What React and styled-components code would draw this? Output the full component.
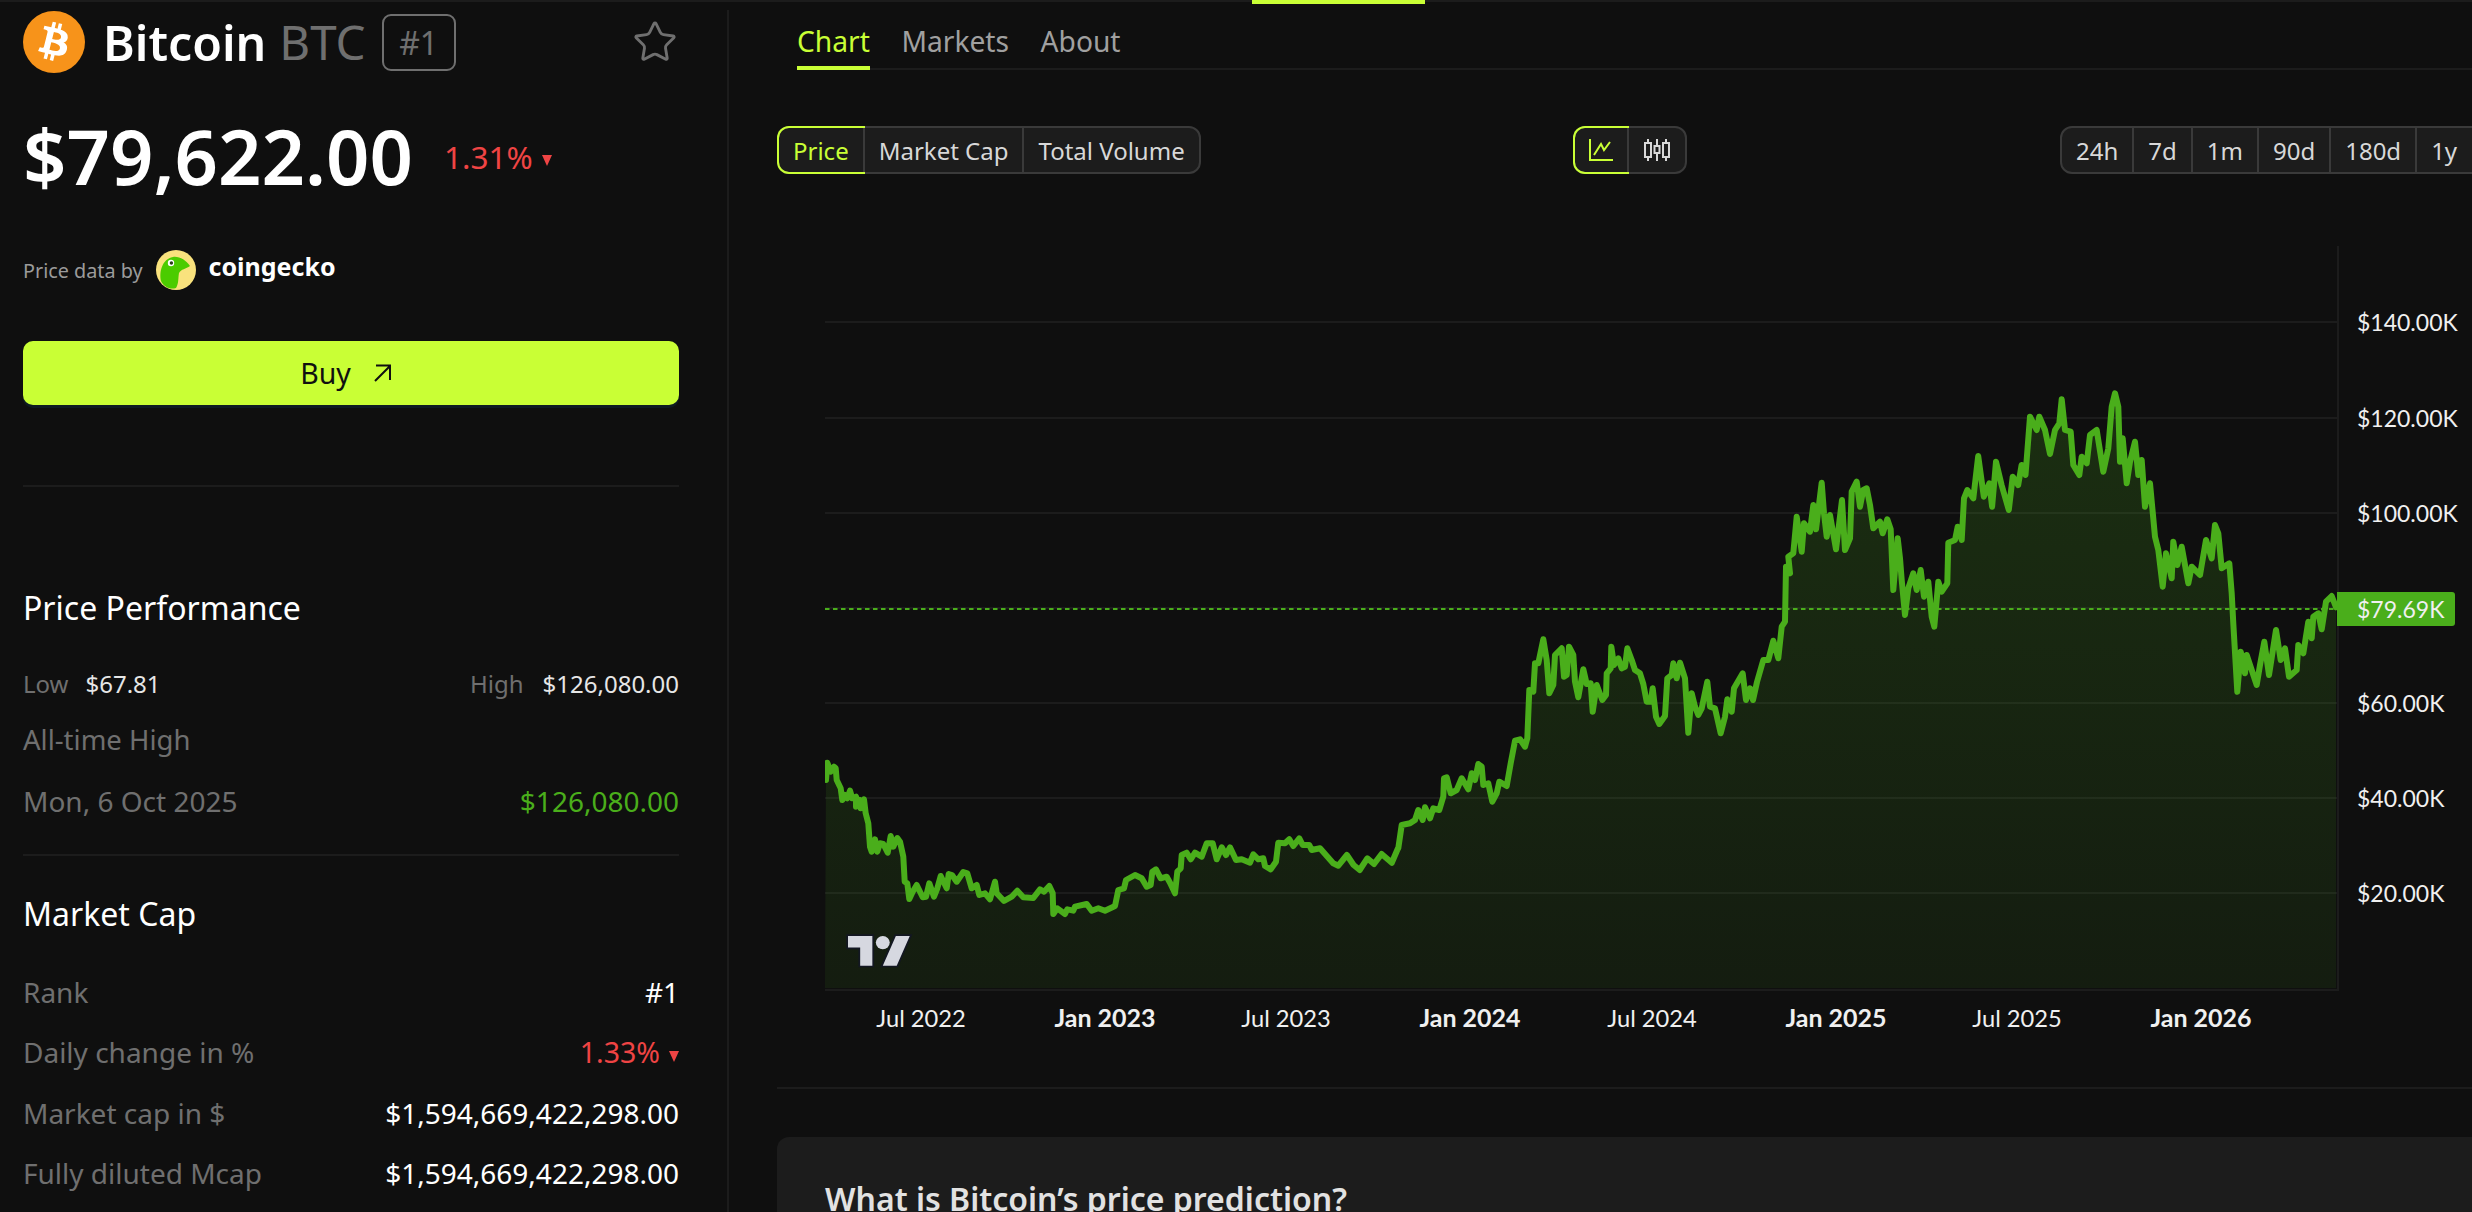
import React from "react";
import styled, { createGlobalStyle } from "styled-components";
import { Star } from "lucide-react";

const LIME = "#c9ff35";
const GREEN = "#4aae1b";
const RED = "#ef4444";
const DIM = "#6f6f6f";
const RULE = "#1c1c1c";

const GlobalStyle = createGlobalStyle`
  html, body {
    margin: 0;
    background: #0f0f0f;
    overflow: hidden;
  }
  body {
    font-family: "Noto Sans", "Liberation Sans", sans-serif;
    color: #fff;
  }
`;

const Page = styled.div`
  width: 2472px;
  height: 1212px;
  overflow: hidden;
  background: #0f0f0f;
`;
const TopStrip = styled.div`
  position: relative;
  height: 2px;
  background: ${RULE};
`;
const TopMark = styled.div`
  position: absolute;
  left: 1252px;
  top: 0;
  width: 173px;
  height: 4px;
  background: ${LIME};
`;
const Body = styled.div`
  display: flex;
  height: 1210px;
`;

/* left column */
const Sidebar = styled.aside`
  flex: none;
  box-sizing: border-box;
  width: 729px;
  padding: 9px 50px 0 23px;
  position: relative;
  &::after {
    content: "";
    position: absolute;
    right: 0;
    top: 8px;
    bottom: 0;
    width: 2px;
    background: ${RULE};
  }
`;
const CoinHeader = styled.div`
  display: flex;
  align-items: center;
  height: 62px;
`;
const CoinName = styled.span`
  margin-left: 18px;
  font-size: 48.2px;
  font-weight: 600;
  line-height: 62px;
`;
const CoinSymbol = styled.span`
  margin-left: 13px;
  font-size: 47.5px;
  line-height: 62px;
  color: ${DIM};
`;
const RankBadge = styled.span`
  box-sizing: border-box;
  display: flex;
  align-items: center;
  justify-content: center;
  width: 74px;
  height: 57px;
  margin-left: 16px;
  border: 2px solid ${DIM};
  border-radius: 9px;
  font-size: 32px;
  color: ${DIM};
`;
const FavStar = styled(Star)`
  margin-left: auto;
  margin-right: 1px;
  color: ${DIM};
`;
const PriceRow = styled.div`
  display: flex;
  align-items: center;
  height: 80px;
  margin-top: 43px;
`;
const BigPrice = styled.span`
  font-size: 76px;
  font-weight: 600;
  line-height: 80px;
`;
const Change = styled.span`
  display: inline-flex;
  align-items: center;
  color: ${RED};
  font-size: ${(p) => p.$size}px;
  margin-left: ${(p) => p.$offset || 0}px;
`;
const DownArrow = styled.i`
  width: 0;
  height: 0;
  margin-left: 9px;
  margin-top: 8px;
  border-left: 5.5px solid transparent;
  border-right: 5.5px solid transparent;
  border-top: 11px solid ${RED};
`;
const DataBy = styled.div`
  display: flex;
  align-items: center;
  height: 40px;
  margin-top: 54px;
`;
const DataByLabel = styled.span`
  font-size: 19.8px;
  color: #9b9b9b;
`;
const GeckoLogo = styled.svg`
  width: 40px;
  height: 40px;
  margin-left: 13px;
`;
const GeckoName = styled.span`
  margin-left: 13px;
  margin-top: -9px;
  font-size: 25px;
  font-weight: 700;
`;
const BuyButton = styled.button`
  display: flex;
  align-items: center;
  justify-content: center;
  gap: 21px;
  width: 100%;
  height: 64px;
  margin-top: 51px;
  padding: 0 10px 0 0;
  border: none;
  border-radius: 10px;
  background: ${LIME};
  box-shadow: 0 3px 0 #0e1b22;
  color: #101010;
  font-family: inherit;
  font-size: 28.5px;
`;
const Divider = styled.div`
  height: 2px;
  margin-top: ${(p) => p.$top}px;
  background: ${RULE};
`;
const SectionTitle = styled.h3`
  margin: ${(p) => p.$top}px 0 0;
  font-size: 32px;
  font-weight: 400;
  line-height: 40px;
  color: #fff;
`;
const RangeRow = styled.div`
  display: flex;
  justify-content: space-between;
  height: 32px;
  line-height: 32px;
  margin-top: 40px;
  font-size: 24px;
`;
const RangeItem = styled.span`
  display: flex;
  gap: ${(p) => p.$gap}px;
  color: #e6e6e6;
`;
const DimText = styled.span`
  color: ${DIM};
`;
const StatRow = styled.div`
  display: flex;
  justify-content: space-between;
  align-items: center;
  height: 40px;
  margin-top: ${(p) => p.$top ?? 20.5}px;
  font-size: 28px;
`;
const StatLabel = styled.span`
  color: ${DIM};
  font-size: ${(p) => p.$size || 28}px;
`;
const StatValue = styled.span`
  color: ${(p) => p.$color || "#fff"};
`;

/* right column */
const Main = styled.main`
  flex: 1;
  min-width: 0;
  padding-left: 48px;
`;
const TabBar = styled.nav`
  display: flex;
  gap: 31.5px;
  height: 66px;
  margin-left: 20px;
  border-bottom: 2px solid ${RULE};
`;
const Tab = styled.a`
  box-sizing: border-box;
  height: 68px;
  padding-top: 15.5px;
  font-size: 28.2px;
  line-height: 46px;
  color: ${(p) => (p.$active ? LIME : "#a0a0a0")};
  border-bottom: 4px solid ${(p) => (p.$active ? LIME : "transparent")};
`;
const Toolbar = styled.div`
  display: grid;
  grid-template-columns: 796px 487px 1fr;
  margin-top: 56px;
`;
const SegmentGroup = styled.div`
  display: inline-flex;
  justify-self: start;
  box-sizing: border-box;
  height: 48px;
  border: 2px solid #3a3a3a;
  border-radius: 12px;
  background: ${RULE};
`;
const Segment = styled.button`
  position: relative;
  display: flex;
  align-items: center;
  justify-content: center;
  flex: none;
  padding: 0 14px;
  border: none;
  background: none;
  border-left: 2px solid #3a3a3a;
  color: ${(p) => (p.$active ? LIME : "#d8d8d8")};
  font-family: inherit;
  font-size: 24px;
  &:first-child {
    border-left: none;
    border-radius: 10px 0 0 10px;
  }
  ${(p) =>
    p.$active &&
    `
    border-left: none;
    box-shadow: 0 0 0 2px ${LIME};
  `}
`;
// the selected range sits past the right edge, only its border shows
const OffscreenRange = styled(Segment)`
  margin-left: 3px;
`;
const ChartWrap = styled.div`
  margin: 72px 0 0 48px;
  height: 841px;
`;
const ChartSvg = styled.svg`
  display: block;
  font-family: Lato, "Liberation Sans", sans-serif;
`;
const AxisText = styled.text`
  font-size: ${(p) => (p.$strong ? 25 : p.$size || 23)}px;
  fill: #f0f0f0;
  font-weight: ${(p) => (p.$strong ? 700 : 400)};
`;
const PageRule = styled.div`
  height: 2px;
  background: ${RULE};
`;
const InfoCard = styled.section`
  margin-top: 48px;
  height: 200px;
  padding: 42px 48px 0;
  border-radius: 12px 0 0 0;
  background: ${RULE};
`;
const InfoTitle = styled.h2`
  margin: 0;
  font-size: 32px;
  font-weight: 600;
  line-height: 40px;
  color: #e2e2e2;
`;

// price line traced off the chart: offset x/y, zoom x/y, then x,y pairs
const seg = (ox, oy, kx, ky, flat) => {
  const out = [];
  for (let i = 0; i < flat.length; i += 2) {
    out.push([ox + flat[i] / kx, oy + flat[i + 1] / ky]);
  }
  return out;
};

const linePoints = [
  ...seg(820, 700, 3, 3, [
    18,240, 22,188, 32,215, 42,200, 47,205, 50,240, 62,265, 67,300, 75,285, 82,295, 90,272, 97,295,
    108,290, 108,320, 120,300, 122,325, 132,298, 137,340, 145,370, 150,440, 155,455, 165,418, 172,455,
    180,430, 190,432, 203,458, 212,408, 220,440, 232,414, 240,425, 250,470, 254,545, 262,550, 268,597,
    278,575, 290,555, 308,592, 318,590, 328,550, 342,590, 352,565, 362,528, 380,565, 386,522, 396,525,
    410,545, 430,516, 442,520, 455,565, 470,555, 478,585, 495,580, 510,598, 525,545, 530,580, 552,603,
    575,590, 592,572, 610,592, 640,594, 660,568, 672,575, 688,558, 698,580, 700,642, 712,625, 735,642,
    742,628, 760,632, 765,620, 800,612, 815,632, 835,625, 855,632, 885,618, 895,570, 912,565, 918,540,
    945,525, 965,535, 980,560, 992,555, 997,515, 1008,508, 1022,535, 1040,530, 1050,548, 1065,580,
    1072,515, 1082,505, 1085,465, 1100,458, 1112,478, 1125,458, 1145,470, 1160,430, 1178,430, 1190,478,
    1205,442, 1218,465, 1230,442, 1248,480, 1265,478, 1290,488, 1300,463, 1315,478, 1330,475, 1335,498,
    1352,508, 1368,485, 1375,428, 1395,430, 1408,418, 1420,438, 1438,415, 1448,435, 1468,435, 1475,450,
    1500,445,
  ]),
  ...seg(800, 700, 1.96, 3, [
    1045,490, 1055,497, 1072,465, 1085,495, 1097,510, 1112,475, 1125,492, 1140,462, 1160,488, 1172,445,
  ]),
  ...seg(1300, 610, 3, 3, [
    295,715, 305,645, 330,640, 345,630, 355,600, 368,630, 375,592, 390,625, 400,595, 418,600, 430,560,
    432,505, 440,502, 452,550, 470,540, 485,505, 505,538, 515,490, 525,510, 535,462, 545,470, 550,525,
    565,520, 577,575, 590,550, 598,515, 620,528, 632,460, 645,392, 660,388, 675,410, 682,385, 688,240,
    700,245, 705,160, 715,160, 730,88, 740,150, 748,250, 760,225, 765,135, 785,115, 792,200, 800,195,
    807,110, 820,135, 825,215, 835,262, 850,178, 860,222, 872,220, 878,305, 890,225, 907,270, 918,255,
    920,190, 932,175, 934,110, 942,165, 955,145, 965,175, 975,170, 982,115, 995,150, 1005,180, 1020,190,
    1030,222, 1040,275, 1052,275, 1058,235, 1068,320, 1078,342, 1095,318, 1102,205, 1115,195, 1120,160,
    1130,205, 1140,158, 1155,205, 1165,368, 1175,250, 1185,290, 1195,315, 1205,295, 1222,215, 1230,290,
    1245,295, 1262,370, 1275,320, 1282,268, 1295,305, 1302,235, 1328,190, 1338,270, 1350,235,
  ]),
  [1753, 700], [1757, 682],
  ...seg(1730, 470, 3, 3, [
    100,570, 115,570, 130,512, 145,565, 155,470, 165,455, 168,290, 180,310, 175,260, 190,250, 200,140,
    215,245, 222,160, 240,185, 250,105, 258,178, 275,38, 282,130, 290,200, 300,135, 318,238, 336,90,
    345,240, 360,205, 365,65, 380,35, 390,110, 400,60, 410,55, 420,105, 430,175, 450,155, 458,190,
    472,148, 482,178, 490,360, 503,205, 510,265, 515,330, 525,435, 535,355, 550,310, 560,360, 572,300,
    582,380, 595,335, 605,440, 613,470, 625,335, 635,365, 652,340, 655,218, 675,210, 683,170, 695,210,
    702,85, 712,60, 730,85,
  ]),
  ...seg(1600, 360, 1.798, 3, [
    680,288, 690,410, 700,370, 705,440, 712,305, 722,375, 735,450, 742,350, 752,375, 758,315, 765,345,
  ]),
  ...seg(2030, 380, 3, 3, [
    0,110, 20,150, 28,110, 45,150, 60,222, 75,150, 88,130, 95,58, 105,150, 122,155, 130,255, 148,285,
    155,230, 170,250, 180,165, 200,150, 220,275, 235,205, 245,80, 255,40, 265,80, 270,245, 278,175,
    290,310, 300,245, 315,185, 325,285, 335,240, 345,380, 360,310, 375,470, 385,510, 398,620, 408,520,
    425,595, 430,485, 442,555, 455,500, 475,610, 485,560, 510,585, 528,480, 545,535, 555,435, 565,460,
    575,565, 598,550, 605,640, 610,730, 622,935, 632,815, 645,880, 650,825, 665,870, 680,915, 690,855,
    703,785, 717,885, 738,750, 752,840, 765,805, 777,890, 800,870, 805,795, 820,820, 835,725, 845,775,
    850,710, 865,700, 875,748, 888,665, 905,648, 918,682,
  ]),
];
const linePath = linePoints.map(([x, y]) => `${x.toFixed(1)},${y.toFixed(1)}`).join(" ");
const areaPath = `825,988 ${linePath} 2336,988`;

const priceTicks = [
  ["$140.00K", 322],
  ["$120.00K", 418],
  ["$100.00K", 513],
  ["$60.00K", 703],
  ["$40.00K", 798],
  ["$20.00K", 893],
];
const gridLines = [322, 418, 513, 608, 703, 798, 893];
const timeTicks = [
  ["Jul 2022", 921],
  ["Jan 2023", 1105, true],
  ["Jul 2023", 1286],
  ["Jan 2024", 1470, true],
  ["Jul 2024", 1652],
  ["Jan 2025", 1836, true],
  ["Jul 2025", 2017],
  ["Jan 2026", 2201, true],
];

const PriceChart = () => (
  <ChartSvg width="1647" height="841" viewBox="825 246 1647 841">
    <defs>
      <linearGradient id="area" gradientUnits="userSpaceOnUse" x1="0" y1="390" x2="0" y2="988">
        <stop offset="0" stopColor={GREEN} stopOpacity="0.2" />
        <stop offset="1" stopColor={GREEN} stopOpacity="0.085" />
      </linearGradient>
    </defs>
    {gridLines.map((y) => (
      <line key={y} x1="825" x2="2338" y1={y} y2={y} stroke={RULE} strokeWidth="2" />
    ))}
    <polygon points={areaPath} fill="url(#area)" />
    <line x1="825" x2="2338" y1="609" y2="609" stroke={GREEN} strokeWidth="2" strokeDasharray="4.5 3.5" />
    <polyline points={linePath} fill="none" stroke={GREEN} strokeWidth="6" strokeLinejoin="round" strokeLinecap="round" />
    <line x1="825" x2="2339" y1="990" y2="990" stroke={RULE} strokeWidth="2" />
    <line x1="2338" x2="2338" y1="246" y2="991" stroke={RULE} strokeWidth="2" />
    {/* TradingView mark */}
    <g transform="translate(848 936) scale(1.74 1.65)" >
      <path d="M14 18H7V7H0V0h14v18zM28 18h-8L27.5 0h8L28 18z" fill="#d6d8e0" stroke="#131722" strokeWidth="2" paintOrder="stroke" />
      <circle cx="20" cy="4" r="4" fill="#d6d8e0" />
    </g>
    {priceTicks.map(([label, y]) => (
      <AxisText key={label} x="2357" y={y + 9}>{label}</AxisText>
    ))}
    <path d="M2337 592h115a3 3 0 0 1 3 3v28a3 3 0 0 1-3 3h-115z" fill={GREEN} />
    <AxisText x="2357" y="618">$79.69K</AxisText>
    {timeTicks.map(([label, x, strong]) => (
      <AxisText key={label} x={x} y="1027" textAnchor="middle" $size={23.7} $strong={strong}>{label}</AxisText>
    ))}
  </ChartSvg>
);

const BitcoinLogo = () => (
  <svg width="62" height="62" viewBox="0 0 64 64">
    <circle cx="32" cy="32" r="32" fill="#f7931a" />
    <path
      fill="#fff"
      d="M46.1 27.4c.6-4.3-2.6-6.6-7.1-8.1l1.5-5.8-3.5-.9-1.4 5.7c-.9-.2-1.9-.5-2.8-.7l1.4-5.7-3.5-.9-1.5 5.8c-.8-.2-1.5-.3-2.2-.5l-4.9-1.2-.9 3.8s2.6.6 2.6.6c1.4.4 1.7 1.3 1.6 2l-1.6 6.5-2.3 9.2c-.2.4-.6 1-1.6.8 0 0-2.6-.6-2.6-.6l-1.7 4 4.6 1.1c.9.2 1.7.4 2.5.6l-1.5 5.9 3.5.9 1.5-5.8c1 .3 1.9.5 2.8.7l-1.4 5.8 3.5.9 1.5-5.9c6 1.1 10.5.7 12.4-4.7 1.5-4.4-.1-6.9-3.2-8.5 2.3-.5 4-2 4.5-5.1zm-8 11.2c-1.1 4.4-8.4 2-10.8 1.4l1.9-7.7c2.4.6 10 1.8 8.9 6.3zm1.1-11.3c-1 4-7.1 2-9.1 1.5l1.8-7c2 .5 8.3 1.4 7.3 5.5z"
    />
  </svg>
);

const Gecko = () => (
  <GeckoLogo viewBox="0 0 40 40">
    <circle cx="20" cy="20" r="20" fill="#f9e27d" />
    <path d="M5 31C3 22 6 9 17 7c6-1 13 3 17 9-4 3-9 3-11 7-1 5 0 10-3 15-6 2-12-1-15-7z" fill="#4bcc00" />
    <circle cx="15" cy="13" r="3.2" fill="#fff" />
    <circle cx="15.4" cy="13" r="1.7" fill="#2a3b1c" />
  </GeckoLogo>
);

const BuyArrow = () => (
  <svg width="20" height="20" viewBox="0 0 20 20" fill="none" stroke="#101010" strokeWidth="2">
    <path d="M3 18L18 3M4 2.5h14V17" />
  </svg>
);

const LineIcon = () => (
  <svg width="24" height="24" viewBox="0 0 24 24" fill="none" stroke={LIME} strokeWidth="2">
    <path d="M1 1v21h23M5 17l7-11 3 6 6-8" />
  </svg>
);

const CandleIcon = () => (
  <svg width="28" height="22" viewBox="0 0 28 22" fill="none" stroke="#d8d8d8" strokeWidth="2">
    <path d="M5 0v22M14 0v22M23 0v22" />
    <rect x="2" y="4" width="6" height="14" fill="#1c1c1c" />
    <rect x="11.5" y="7" width="5" height="7" fill="#1c1c1c" />
    <rect x="20" y="4" width="6" height="14" fill="#1c1c1c" />
  </svg>
);

const marketRows = [
  ["Market cap in $", "$1,594,669,422,298.00"],
  ["Fully diluted Mcap", "$1,594,669,422,298.00"],
];
const metrics = ["Price", "Market Cap", "Total Volume"];
const ranges = ["24h", "7d", "1m", "90d", "180d", "1y"];

const App = () => (
  <Page>
    <GlobalStyle />
    <TopStrip>
      <TopMark />
    </TopStrip>
    <Body>
      <Sidebar>
        <CoinHeader>
          <BitcoinLogo />
          <CoinName>Bitcoin</CoinName>
          <CoinSymbol>BTC</CoinSymbol>
          <RankBadge>#1</RankBadge>
          <FavStar size={46} strokeWidth={1.5} />
        </CoinHeader>
        <PriceRow>
          <BigPrice>$79,622.00</BigPrice>
          <Change $size={31.5} $offset={31}>1.31%<DownArrow /></Change>
        </PriceRow>
        <DataBy>
          <DataByLabel>Price data by</DataByLabel>
          <Gecko />
          <GeckoName>coingecko</GeckoName>
        </DataBy>
        <BuyButton>Buy <BuyArrow /></BuyButton>
        <Divider $top={80} />
        <SectionTitle $top={101}>Price Performance</SectionTitle>
        <RangeRow>
          <RangeItem $gap={17}><DimText>Low</DimText>$67.81</RangeItem>
          <RangeItem $gap={19}><DimText>High</DimText>$126,080.00</RangeItem>
        </RangeRow>
        <StatRow $top={19.5}>
          <StatLabel $size={27.5}>All-time High</StatLabel>
        </StatRow>
        <StatRow $top={21}>
          <StatLabel>Mon, 6 Oct 2025</StatLabel>
          <StatValue $color={GREEN}>$126,080.00</StatValue>
        </StatRow>
        <Divider $top={33} />
        <SectionTitle $top={38}>Market Cap</SectionTitle>
        <StatRow $top={38}>
          <StatLabel>Rank</StatLabel>
          <StatValue>#1</StatValue>
        </StatRow>
        <StatRow>
          <StatLabel>Daily change in %</StatLabel>
          <Change $size={28.5}>1.33%<DownArrow /></Change>
        </StatRow>
        {marketRows.map(([label, value]) => (
          <StatRow key={label}>
            <StatLabel>{label}</StatLabel>
            <StatValue>{value}</StatValue>
          </StatRow>
        ))}
      </Sidebar>
      <Main>
        <TabBar>
          <Tab $active>Chart</Tab>
          <Tab>Markets</Tab>
          <Tab>About</Tab>
        </TabBar>
        <Toolbar>
          <SegmentGroup>
            {metrics.map((m, i) => (
              <Segment key={m} $active={i === 0}>{m}</Segment>
            ))}
          </SegmentGroup>
          <SegmentGroup>
            <Segment $active><LineIcon /></Segment>
            <Segment><CandleIcon /></Segment>
          </SegmentGroup>
          <SegmentGroup>
            {ranges.map((r) => (
              <Segment key={r}>{r}</Segment>
            ))}
            <OffscreenRange $active />
          </SegmentGroup>
        </Toolbar>
        <ChartWrap>
          <PriceChart />
        </ChartWrap>
        <PageRule />
        <InfoCard>
          <InfoTitle>What is Bitcoin’s price prediction?</InfoTitle>
        </InfoCard>
      </Main>
    </Body>
  </Page>
);

export default App;
